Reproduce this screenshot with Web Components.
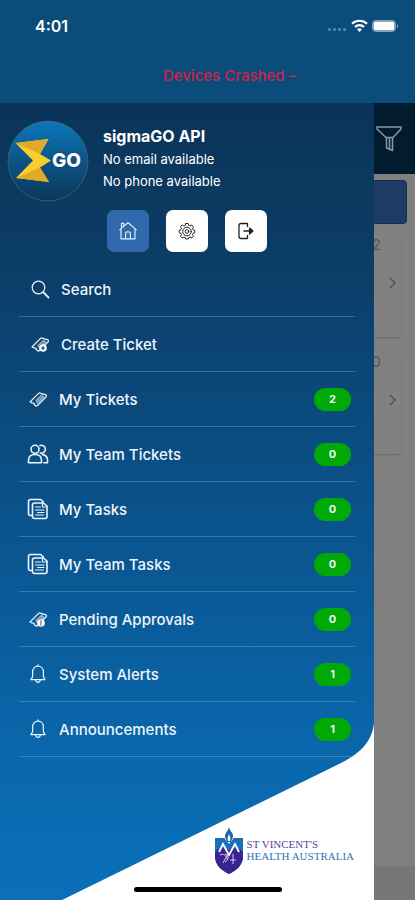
<!DOCTYPE html>
<html lang="en">
<head>
<meta charset="utf-8">
<meta name="viewport" content="width=device-width, initial-scale=1">
<title>sigmaGO</title>
<style>
  html, body {
    margin: 0;
    min-height: 100%;
  }
  body {
    font-family: Inter, Roboto, "Liberation Sans", sans-serif;
    color: #fff;
    background: #808080;
  }
</style>
</head>
<body>
<app-shell>
  <status-bar slot="top" time="4:01"></status-bar>
  <alert-banner slot="top">Devices Crashed –</alert-banner>

  <ticket-page slot="page">
    <ticket-card count="2"></ticket-card>
    <ticket-card count="0"></ticket-card>
  </ticket-page>

  <side-drawer slot="drawer">
    <user-profile slot="profile" name="sigmaGO API">
      <span>No email available</span>
      <span>No phone available</span>
    </user-profile>

    <icon-button slot="actions" icon="home" label="Home" active></icon-button>
    <icon-button slot="actions" icon="gear" label="Settings"></icon-button>
    <icon-button slot="actions" icon="logout" label="Log out"></icon-button>

    <menu-item icon="search" lead>Search</menu-item>
    <menu-item icon="ticketAdd" lead>Create Ticket</menu-item>
    <menu-item icon="ticket" count="2">My Tickets</menu-item>
    <menu-item icon="team" count="0">My Team Tickets</menu-item>
    <menu-item icon="tasks" count="0">My Tasks</menu-item>
    <menu-item icon="tasks" count="0">My Team Tasks</menu-item>
    <menu-item icon="ticketAlert" count="0">Pending Approvals</menu-item>
    <menu-item icon="bell" count="1">System Alerts</menu-item>
    <menu-item icon="bell" count="1">Announcements</menu-item>

    <brand-logo slot="footer"></brand-logo>
  </side-drawer>
</app-shell>

<script>
const ticketBody = `
  <path d="M3 14 11.600 5.400c.6-.6 1.400-.6 2 0l4.800 1.200c1.200.4 1.400 1.500.6 2.400L10.500 17.500c-.7.7-1.500.7-2.200 0l-1-1c.2-1-.6-1.700-1.600-1.300z"/>
  <path d="m9 12.500 5.500-5.200 2.500 1.700-6.500 6.300z" fill="currentColor" fill-opacity=".4" stroke-opacity=".5"/>`;

const ICONS = {
  search: '<circle cx="9.500" cy="9.500" r="6.300"/><path d="m14.200 14.200 5.300 5.300" stroke-width="1.800"/>',
  ticket: ticketBody,
  ticketAdd: ticketBody + '<circle cx="14" cy="15" r="3.800" fill="#fff" stroke="none"/><path d="M14 13.500v3M12.500 15h3" stroke="#0b4677"/>',
  ticketAlert: ticketBody + '<circle cx="14" cy="15" r="3.800" fill="#fff" stroke="none"/><path d="M14 12.500v2.900M14 16.700v.8" stroke="#b3541e"/>',
  team: '<g stroke-width="1.600"><circle cx="8" cy="6.300" r="4"/><path d="M13 2.500a4 4 0 1 1 .3 7.600M1.500 19.800v-2.600c0-3.600 2.700-5.700 6.500-5.700s6.500 2.100 6.500 5.700v2.600zM15.500 11.600c3.100.5 5 2.600 5 5.600v2.600h-3.600"/></g>',
  tasks: '<g stroke-width="1.600"><path d="M5 17.500H3.500c-1.100 0-2-.9-2-2V3.500c0-1.100.9-2 2-2h10.300l2.600 2.500"/><path d="M7.500 5h9l3.500 3v10.500c0 1.100-.9 2-2 2H7.500c-1.100 0-2-.9-2-2V7c0-1.100.9-2 2-2z"/></g><path d="M8.500 9h5M8.500 12h8.500M10.500 14.500H17M8.500 17h8M15.500 5.500V9H19.500"/>',
  bell: '<path d="M11 3.200c-3.300 0-5.400 2.500-5.400 5.800v4.600l-1.700 3.100h14.200l-1.700-3.100V9c0-3.300-2.100-5.800-5.400-5.800zM11 3.200V1.800M8.600 17c.2 1.400 1.100 2.300 2.400 2.300s2.200-.9 2.400-2.300"/>',
  home: '<path d="M2.800 9.600 11 2.800l8.200 6.800M4 9v9.800h14V9M4.500 8V3.400h2.300v2.500M8.600 18.800v-5.200c0-1.100.7-1.800 1.800-1.800h1.200c1.100 0 1.800.7 1.800 1.800v5.200"/>',
  gear: '<g stroke-width="1"><path d="M9.800 3.500h2.400l.5 1.900 1.400.6 1.700-1 1.700 1.700-1 1.700.6 1.400 1.700.5v2.400l-1.700.5-.6 1.400 1 1.700-1.700 1.700-1.700-1-1.400.6-.5 1.400H9.800l-.5-1.400-1.400-.6-1.700 1-1.700-1.700 1-1.700-.6-1.400-1.700-.5v-2.400l1.700-.5.6-1.400-1-1.700L6.200 5l1.700 1 1.400-.6z"/><circle cx="11" cy="11.500" r="4.300"/><circle cx="11" cy="11.500" r="1.800"/></g>',
  logout: '<path d="M11.500 3.500H6c-1.200 0-2 .8-2 2v11c0 1.200.8 2 2 2h5.500M12.500 3.500v3M12.500 15.500v3" stroke-width="1.300"/><path d="M9 11h8" stroke-width="1.500"/><path d="m14.500 8 3.500 3-3.500 3z" fill="currentColor"/>'
};

function icon(name) {
  return `<svg width="22" height="22" viewBox="0 0 22 22" fill="none" stroke="currentColor" stroke-width="1.200" stroke-linecap="round" stroke-linejoin="round" aria-hidden="true">${ICONS[name]}</svg>`;
}

class AppShell extends HTMLElement {
  constructor() {
    super();
    this.attachShadow({ mode: "open" }).innerHTML = `
      <style>
        :host {
          display: flex;
          flex-direction: column;
          min-height: 100vh;
          position: relative;
        }
        header { background: #0a4c7a; height: 103px; }
        main { flex: 1; display: grid; }
        ::slotted([slot="page"]), ::slotted([slot="drawer"]) { grid-area: 1 / 1; }
        .home-bar {
          position: absolute;
          z-index: 2;
          bottom: 8px;
          left: 50%;
          width: 148px;
          height: 5px;
          margin-left: -74px;
          border-radius: 3px;
          background: #000;
        }
      </style>
      <header><slot name="top"></slot></header>
      <main>
        <slot name="page"></slot>
        <slot name="drawer"></slot>
      </main>
      <div class="home-bar"></div>`;
  }
}

class StatusBar extends HTMLElement {
  constructor() {
    super();
    this.attachShadow({ mode: "open" }).innerHTML = `
      <style>
        :host {
          display: flex;
          align-items: center;
          justify-content: space-between;
          height: 51px;
          padding: 0 15px 0 35px;
        }
        time { font-size: 16px; font-weight: 600; }
      </style>
      <time>${this.getAttribute("time")}</time>
      <svg width="73" height="14" viewBox="0 0 73 14" fill="#fff" role="img" aria-label="Wi-Fi on, battery full">
        <g opacity=".3">
          <rect x="1" y="9" width="3" height="3" rx="1"/><rect x="6" y="9" width="3" height="3" rx="1"/>
          <rect x="11" y="9" width="3" height="3" rx="1"/><rect x="16" y="9" width="3" height="3" rx="1"/>
        </g>
        <g fill="none" stroke="#fff" stroke-width="2.200">
          <path d="M25 4.700a11 11 0 0 1 15 0"/>
          <path d="M28 8a6.500 6.500 0 0 1 9 0"/>
        </g>
        <path d="M30 10.300a3.700 3.700 0 0 1 5 0L32.500 13z"/>
        <rect x="45.500" y="1.500" width="23" height="11" rx="3.500" fill="none" stroke="#fff" stroke-opacity=".5"/>
        <rect x="46.500" y="2.500" width="21" height="9" rx="2"/>
        <path d="M70 5.200c1.600.4 1.600 3.200 0 3.600z" opacity=".6"/>
      </svg>`;
  }
}

class AlertBanner extends HTMLElement {
  constructor() {
    super();
    this.attachShadow({ mode: "open" }).innerHTML = `
      <style>
        :host {
          display: block;
          padding: 15px 16px 0 60px;
          text-align: center;
          font-size: 15px;
          line-height: 20px;
          font-weight: 500;
          color: #d0224a;
        }
      </style>
      <slot></slot>`;
  }
}

// Ticket list behind the drawer, already dimmed
class TicketPage extends HTMLElement {
  constructor() {
    super();
    this.attachShadow({ mode: "open" }).innerHTML = `
      <style>
        :host {
          display: flex;
          flex-direction: column;
          background: #808080;
        }
        .toolbar {
          display: flex;
          justify-content: flex-end;
          align-items: center;
          height: 71px;
          padding-right: 12px;
          background: #001c2e;
        }
        button {
          padding: 0;
          border: 0;
          background: none;
          color: #8c969e;
          display: flex;
        }
        .tab {
          height: 44px;
          margin: 6px 8px 8px;
          border-radius: 4px;
          background: #1d3b65;
          border: 1px solid #0d3156;
          box-sizing: border-box;
        }
        .cards {
          display: flex;
          flex-direction: column;
          gap: 12px;
          padding: 0 14px;
        }
        .tabbar { margin-top: auto; height: 34px; background: #777; }
      </style>
      <div class="toolbar">
        <button aria-label="Filter">
          <svg width="28" height="28" viewBox="0 0 28 28" fill="none" stroke="currentColor" stroke-width="1.500" stroke-linejoin="round">
            <path d="M2 2h24v2l-8.500 9v12.500l-6-2.500V13L2 4zM10 12.500h8M14.500 13v11"/>
          </svg>
        </button>
      </div>
      <div class="tab"></div>
      <div class="cards"><slot></slot></div>
      <div class="tabbar"></div>`;
  }
}

class TicketCard extends HTMLElement {
  constructor() {
    super();
    this.attachShadow({ mode: "open" }).innerHTML = `
      <style>
        :host {
          display: flex;
          flex-direction: column;
          align-items: flex-end;
          height: 105px;
          border-radius: 4px;
          background: #818181;
          box-shadow: 0 1px 2px #6a6a6a;
          color: #585858;
        }
        span { font-size: 15px; line-height: 20px; padding: 3px 20px 0 0; }
        svg { margin: 20px 3px 0 0; }
      </style>
      <span>${this.getAttribute("count")}</span>
      <svg width="10" height="16" viewBox="0 0 10 16" fill="none" stroke="#4c4c4c" stroke-width="1.200"><path d="m2 3 5 5-5 5"/></svg>`;
  }
}

class SideDrawer extends HTMLElement {
  constructor() {
    super();
    this.attachShadow({ mode: "open" }).innerHTML = `
      <style>
        :host {
          display: flex;
          flex-direction: column;
          position: relative;
          z-index: 1;
          margin-right: 41px;
          background: #fff;
        }
        .backdrop {
          position: absolute;
          inset: 0;
          width: 100%;
          height: 100%;
          z-index: -1;
        }
        .actions {
          display: flex;
          justify-content: center;
          gap: 17px;
          padding: 8px 0 10px;
        }
        nav { padding: 0 19px; }
        footer {
          display: flex;
          justify-content: flex-end;
          margin-top: auto;
          padding: 0 20px 25px;
        }
      </style>
      <svg class="backdrop" viewBox="0 0 374 797" preserveAspectRatio="none" aria-hidden="true">
        <defs>
          <linearGradient id="sea" x1="0" y1="0" x2="0" y2="1">
            <stop offset="0" stop-color="#0b3457"/>
            <stop offset=".2" stop-color="#0b3d67"/>
            <stop offset=".42" stop-color="#0b4c80"/>
            <stop offset=".63" stop-color="#0a5a98"/>
            <stop offset=".8" stop-color="#0a66aa"/>
            <stop offset="1" stop-color="#0a70b9"/>
          </linearGradient>
        </defs>
        <path d="M0 0H374V620C372 640 358 652 339 661L62 797H0z" fill="url(#sea)"/>
      </svg>
      <slot name="profile"></slot>
      <div class="actions"><slot name="actions"></slot></div>
      <nav aria-label="Main"><slot></slot></nav>
      <footer><slot name="footer"></slot></footer>`;
  }
}

class UserProfile extends HTMLElement {
  constructor() {
    super();
    this.attachShadow({ mode: "open" }).innerHTML = `
      <style>
        :host {
          display: flex;
          align-items: flex-start;
          gap: 14px;
          padding: 17px 7px 0;
        }
        .lines { display: flex; flex-direction: column; padding-top: 4px; }
        h1 { margin: 0; font-size: 16px; line-height: 24px; font-weight: 700; }
        ::slotted(span) { font-size: 13px; line-height: 22px; }
      </style>
      <svg width="82" height="82" viewBox="0 0 82 82" role="img" aria-label="sigmaGO">
        <defs>
          <linearGradient id="disc" x1="0" y1="0" x2="0" y2="1">
            <stop offset="0" stop-color="#0c78bb"/>
            <stop offset=".5" stop-color="#0c5486"/>
            <stop offset="1" stop-color="#0b365a"/>
          </linearGradient>
        </defs>
        <circle cx="41" cy="41" r="40" fill="url(#disc)" stroke="#3c6280" stroke-width=".8"/>
        <path d="M8.500 23 41.500 19 33 34 44 40.500 33 47.500 42 62 9 58 26 40.500z" fill="#f8ce2f"/>
        <path d="M8.500 23 41.500 19 33 34z" fill="#e2ab27"/>
        <path d="M9 58 33 47.500 42 62z" fill="#e2ab27"/>
        <text x="45" y="47" font-size="19" font-weight="800" font-family="Inter, sans-serif" fill="#fff" stroke="#0b3f69" stroke-width="1" paint-order="stroke">GO</text>
      </svg>
      <div class="lines">
        <h1>${this.getAttribute("name")}</h1>
        <slot></slot>
      </div>`;
  }
}

class IconButton extends HTMLElement {
  constructor() {
    super();
    this.attachShadow({ mode: "open" }).innerHTML = `
      <style>
        :host { display: block; }
        button {
          display: flex;
          align-items: center;
          justify-content: center;
          width: 42px;
          height: 42px;
          padding: 0;
          border: 0;
          border-radius: 7px;
          background: #fff;
          color: #222;
        }
        :host([active]) button { background: #3069ac; color: #d9ecfb; }
      </style>
      <button aria-label="${this.getAttribute("label")}">${icon(this.getAttribute("icon"))}</button>`;
  }
}

class MenuItem extends HTMLElement {
  constructor() {
    super();
    const count = this.getAttribute("count");
    this.attachShadow({ mode: "open" }).innerHTML = `
      <style>
        :host { display: block; border-bottom: 1px solid rgba(160, 200, 235, .3); }
        a {
          display: flex;
          align-items: center;
          gap: 10px;
          height: 54px;
          padding: 0 4px 0 8px;
          color: #eef5fc;
          text-decoration: none;
          font-size: 15px;
          font-weight: 500;
        }
        :host([lead]) a { padding-left: 10px; }
        .label { flex: 1; }
        .badge {
          width: 37px;
          border-radius: 12px;
          background: #00a905;
          text-align: center;
          font-size: 11px;
          line-height: 23px;
          font-weight: 700;
        }
      </style>
      <a href="#">
        ${icon(this.getAttribute("icon"))}
        <span class="label"><slot></slot></span>
        ${count !== null ? `<span class="badge">${count}</span>` : ""}
      </a>`;
  }
}

class BrandLogo extends HTMLElement {
  constructor() {
    super();
    this.attachShadow({ mode: "open" }).innerHTML = `
      <style>
        :host {
          display: flex;
          align-items: center;
          gap: 3px;
          font-family: "Liberation Serif", serif;
          font-size: 11px;
          line-height: 12px;
        }
        .words { display: flex; flex-direction: column; color: #2f73b5; }
        .saint { color: #54439a; }
      </style>
      <svg width="30" height="50" viewBox="0 0 30 50" aria-hidden="true">
        <path d="M1 13h28v18c0 9-6 14-14 18C7 45 1 40 1 31z" fill="#1b6fb8"/>
        <path d="M1 27c3-4 8-5 14-2 6-3 11-2 14 2v4c0 9-6 14-14 18C7 45 1 40 1 31z" fill="#3a2390"/>
        <path d="M10 12c1 3 3 4 5 7 2-3 4-4 5-7z" fill="#fff"/>
        <path d="M15 1c0 5 4 6 4 10 0 3-2 4-2 6h-4c0-2-2-3-2-6 0-4 4-5 4-10z" fill="#2461ac"/>
        <path d="M15 9c1 3 2 4 1 7h-2c-1-3 0-4 1-7z" fill="#fff"/>
        <path d="M5 27 9 19l6 11 6-11 4 8" fill="none" stroke="#fff" stroke-width="1.800"/>
        <path d="M9 38l6-11M19 29v10M16 35h6M6 30c3-2 7 1 7 4M11 29c4 1 4 6 0 8" fill="none" stroke="#d3cbee"/>
      </svg>
      <div class="words">
        <span class="saint">ST VINCENT'S</span>
        <span>HEALTH AUSTRALIA</span>
      </div>`;
  }
}

customElements.define("app-shell", AppShell);
customElements.define("status-bar", StatusBar);
customElements.define("alert-banner", AlertBanner);
customElements.define("ticket-page", TicketPage);
customElements.define("ticket-card", TicketCard);
customElements.define("side-drawer", SideDrawer);
customElements.define("user-profile", UserProfile);
customElements.define("icon-button", IconButton);
customElements.define("menu-item", MenuItem);
customElements.define("brand-logo", BrandLogo);
</script>
</body>
</html>
